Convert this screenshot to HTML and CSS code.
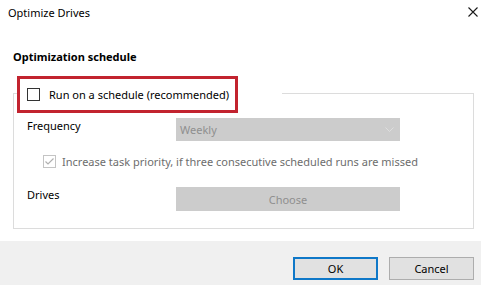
FILE: index.html
```html
<!DOCTYPE html>
<html>
<head>
<meta charset="utf-8">
<link rel="stylesheet" href="styles.css">
</head>
<body>
<div class="window">
  <div class="titlebar">
    <span class="title">Optimize Drives</span>
    <svg class="close" width="10" height="10" viewBox="0 0 10 10"><path d="M0.5 0.5 L9.5 9.5 M9.5 0.5 L0.5 9.5" stroke="#1a1a1a" stroke-width="1.1" fill="none"/></svg>
  </div>
  <div class="content">
    <div class="heading">Optimization schedule</div>
    <div class="group">
      <div class="group-head">
        <div class="legend-wrap">
          <label class="legend">
            <span class="box"></span>
            <span class="legend-text">Run on a schedule (recommended)</span>
          </label>
        </div>
      </div>
      <div class="row row-freq">
        <span class="row-label">Frequency</span>
        <div class="combo">
          <span>Weekly</span>
          <svg width="9" height="5" viewBox="0 0 9 5"><path d="M0.5 0.5 L4.5 4.5 L8.5 0.5" stroke="#dedede" stroke-width="1" fill="none"/></svg>
        </div>
      </div>
      <div class="row row-check">
        <svg class="box2" width="13" height="13" viewBox="0 0 13 13"><rect x="0.5" y="0.5" width="12" height="12" fill="#fff" stroke="#c4c4c4"/><path d="M2.5 6.5 L5 9 L10.5 3.5" stroke="#b0b0b0" stroke-width="1.2" fill="none"/></svg>
        <span class="check-text">Increase task priority, if three consecutive scheduled runs are missed</span>
      </div>
      <div class="row row-drives">
        <span class="row-label">Drives</span>
        <div class="choose">Choose</div>
      </div>
    </div>
  </div>
  <div class="footer">
    <div class="btn btn-default">OK</div>
    <div class="btn">Cancel</div>
  </div>
</div>
</body>
</html>
```

FILE: styles.css
```css
html, body {
  margin: 0;
  padding: 0;
  background: #fff;
}
body {
  font-family: "Noto Sans", "DejaVu Sans", sans-serif;
  font-size: 11px;
  color: #000;
  width: 481px;
  height: 285px;
  overflow: hidden;
}
.window {
  display: flex;
  flex-direction: column;
  height: 285px;
}
.titlebar {
  height: 26px;
  display: flex;
  align-items: center;
  justify-content: space-between;
  padding: 0 3px 0 8px;
}
.title {
  line-height: 16px;
}
.close {
  display: block;
  margin-top: -2px;
}
.content {
  padding: 0 7px 0 13px;
}
.heading {
  font-weight: bold;
  line-height: 16px;
  margin-top: 23px;
  margin-bottom: 28px;
}
.group {
  border: 1px solid #dcdcdc;
  height: 134px;
}
.group-head {
  display: flex;
  margin-top: -18px;
  margin-left: 3px;
}
.legend-wrap {
  background: #fff;
  padding-right: 44px;
}
.legend {
  box-sizing: border-box;
  width: 221px;
  height: 37px;
  border: 3px solid #c2232f;
  display: flex;
  align-items: center;
  padding: 0 0 0 7px;
  white-space: nowrap;
}
.box {
  box-sizing: border-box;
  width: 13px;
  height: 13px;
  border: 1px solid #333;
  background: #fff;
  margin-right: 9px;
  flex: none;
}
.legend-text {
  line-height: 16px;
  margin-top: 1px;
}
.row {
  display: flex;
  padding-left: 13px;
}
.row-label {
  width: 149px;
  line-height: 16px;
  flex: none;
}
.row-freq {
  margin-top: 5px;
}
.combo {
  box-sizing: border-box;
  width: 224px;
  height: 23px;
  background: #cccccc;
  color: #8f8f8f;
  display: flex;
  align-items: center;
  justify-content: space-between;
  padding: 0 6px 0 4px;
}
.row-check {
  margin-top: 12px;
  padding-left: 29px;
  align-items: center;
  height: 16px;
}
.box2 {
  display: block;
  margin-right: 6px;
  flex: none;
}
.check-text {
  color: #6d6d6d;
  line-height: 16px;
  white-space: nowrap;
  margin-top: 1px;
}
.row-drives {
  margin-top: 18px;
}
.choose {
  box-sizing: border-box;
  width: 224px;
  height: 24px;
  background: #cccccc;
  color: #8f8f8f;
  display: flex;
  align-items: center;
  justify-content: center;
}
.footer {
  margin-top: auto;
  height: 44px;
  background: #f0f0f0;
  display: flex;
  justify-content: flex-end;
  align-items: flex-start;
  padding: 16px 7px 0 0;
  box-sizing: border-box;
  gap: 11px;
}
.btn {
  box-sizing: border-box;
  width: 85px;
  height: 23px;
  background: #e1e1e1;
  border: 1px solid #adadad;
  display: flex;
  align-items: center;
  justify-content: center;
}
.btn-default {
  border: 2px solid #0f78c8;
}
```
